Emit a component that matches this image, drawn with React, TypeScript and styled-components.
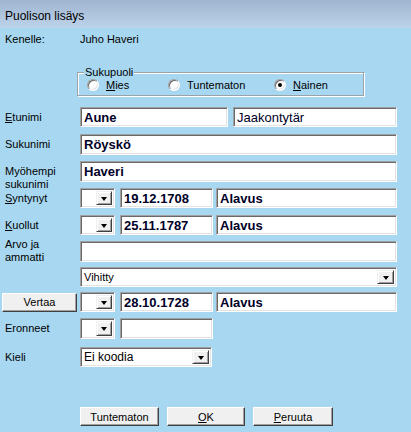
import React from "react";
import styled, { createGlobalStyle } from "styled-components";

const Global = createGlobalStyle`
  html, body { margin: 0; padding: 0; }
  body {
    width: 411px; height: 432px; overflow: hidden;
    background: #a8d8f1;
    font-family: "Liberation Sans", Arial, sans-serif;
  }
`;

const Window = styled.div`
  width: 411px;
  height: 432px;
  display: flex;
  flex-direction: column;
  background: #a8d8f1;
  box-sizing: border-box;
`;

const TitleBar = styled.div`
  height: 28px;
  flex: none;
  box-sizing: border-box;
  padding: 4px 0 0 5px;
  display: flex;
  align-items: center;
  background: linear-gradient(#9fb5d0, #bdd3ea);
  font-size: 12px;
  color: #000;
`;

const Body = styled.div`
  display: flex;
  flex-direction: column;
  padding: 0 14px 0 2px;
`;

const Row = styled.div<{ $h: number; $mt: number }>`
  display: grid;
  grid-template-columns: 78px 1fr;
  grid-template-rows: ${(p) => p.$h}px;
  align-items: center;
  height: ${(p) => p.$h}px;
  margin-top: ${(p) => p.$mt}px;
`;

const Label = styled.div<{ $two?: boolean; $off?: number }>`
  padding-left: 3px;
  font-size: 11px;
  line-height: 13px;
  color: #000;
  align-self: ${(p) => (p.$two ? "start" : "center")};
  margin-top: ${(p) => p.$off ?? 0}px;
  white-space: nowrap;
`;

const Plain = styled.div`
  font-size: 11px;
  line-height: 14px;
  color: #000;
`;

const Fields = styled.div`
  display: flex;
  height: 100%;
  align-items: stretch;
`;

const Sunken = styled.div<{ $w?: number; $ml?: number }>`
  box-sizing: border-box;
  ${(p) => (p.$w ? `width: ${p.$w}px; flex: none;` : "flex: 1;")}
  margin-left: ${(p) => p.$ml ?? 0}px;
  height: 100%;
  background: #fff;
  border: 1px solid;
  border-color: #a0a0a0 #fff #fff #a0a0a0;
  box-shadow: inset 1px 1px 0 #696969, inset -1px -1px 0 #e3e3e3;
  display: flex;
  align-items: center;
  overflow: hidden;
`;

const Value = styled.span<{ $bold?: boolean; $size?: number }>`
  padding-left: 3px;
  font-size: ${(p) => p.$size ?? 13}px;
  font-weight: ${(p) => (p.$bold ? 700 : 400)};
  color: ${(p) => (p.$bold || (p.$size ?? 13) === 13 ? "#000028" : "#000")};
  white-space: nowrap;
  flex: 1;
`;

const DropBtn = styled.div<{ $w: number }>`
  box-sizing: border-box;
  width: ${(p) => p.$w}px;
  flex: none;
  align-self: stretch;
  margin: 2px 2px 2px 0;
  background: #f0f0f0;
  border: 1px solid;
  border-color: #f0f0f0 #404040 #404040 #f0f0f0;
  box-shadow: inset 1px 1px 0 #fff, inset -1px -1px 0 #a0a0a0;
  display: flex;
  align-items: center;
  justify-content: center;
  &::after {
    content: "";
    width: 0;
    height: 0;
    border-left: 3.5px solid transparent;
    border-right: 3.5px solid transparent;
    border-top: 4px solid #000;
    margin-top: 1px;
  }
`;

const GroupBox = styled.div`
  position: relative;
  box-sizing: border-box;
  margin: 26px 0 0 75px;
  width: 287px;
  height: 24px;
  border: 1px solid #9aa3aa;
  box-shadow: 1px 1px 0 #fff, inset 1px 1px 0 #fff;
  display: grid;
  grid-template-columns: 81px 106px auto;
  align-items: center;
  padding-left: 9px;
  padding-top: 2px;
`;

const Legend = styled.span`
  position: absolute;
  top: -8px;
  left: 6px;
  padding: 0 1px;
  background: #a8d8f1;
  font-size: 11px;
  line-height: 14px;
  color: #000;
`;

const RadioItem = styled.label`
  display: flex;
  align-items: center;
  gap: 7px;
  font-size: 11px;
  color: #000;
`;

const RadioCircle = styled.span<{ $on?: boolean }>`
  box-sizing: border-box;
  width: 12px;
  height: 12px;
  border-radius: 50%;
  background: #fff;
  border: 1px solid;
  border-color: #a0a0a0 #fff #fff #a0a0a0;
  box-shadow: inset 1px 1px 0 #696969, inset -1px -1px 0 #e3e3e3;
  display: flex;
  align-items: center;
  justify-content: center;
  &::after {
    content: "";
    width: 4px;
    height: 4px;
    border-radius: 50%;
    background: ${(p) => (p.$on ? "#000" : "transparent")};
  }
`;

const U = styled.span`
  text-decoration: underline;
`;

const WinButton = styled.button<{ $w: number; $h: number }>`
  box-sizing: border-box;
  width: ${(p) => p.$w}px;
  height: ${(p) => p.$h}px;
  padding: 0;
  background: #f0f0f0;
  border: 1px solid;
  border-color: #fff #404040 #404040 #fff;
  box-shadow: inset -1px -1px 0 #a0a0a0;
  font-family: "Liberation Sans", Arial, sans-serif;
  font-size: 11px;
  color: #000;
`;

const ButtonBar = styled.div`
  display: flex;
  gap: 8px;
  margin-top: 40px;
  padding-left: 78px;
`;

function SmallCombo() {
  return (
    <Sunken $w={35}>
      <Value />
      <DropBtn $w={16} />
    </Sunken>
  );
}

export default function App() {
  return (
    <>
      <Global />
      <Window>
        <TitleBar>Puolison lisäys</TitleBar>
        <Body>
          <Row $h={14} $mt={4}>
            <Label>Kenelle:</Label>
            <Plain>Juho Haveri</Plain>
          </Row>

          <GroupBox>
            <Legend>Sukupuoli</Legend>
            <RadioItem>
              <RadioCircle />
              <span>
                <U>M</U>ies
              </span>
            </RadioItem>
            <RadioItem>
              <RadioCircle />
              <span>Tuntematon</span>
            </RadioItem>
            <RadioItem>
              <RadioCircle $on />
              <span>
                <U>N</U>ainen
              </span>
            </RadioItem>
          </GroupBox>

          <Row $h={20} $mt={11}>
            <Label>
              <U>E</U>tunimi
            </Label>
            <Fields>
              <Sunken $w={148}>
                <Value $bold>Aune</Value>
              </Sunken>
              <Sunken $ml={5}>
                <Value>Jaakontytär</Value>
              </Sunken>
            </Fields>
          </Row>

          <Row $h={21} $mt={7}>
            <Label>Sukunimi</Label>
            <Fields>
              <Sunken>
                <Value $bold>Röyskö</Value>
              </Sunken>
            </Fields>
          </Row>

          <Row $h={21} $mt={6}>
            <Label $two $off={4}>
              Myöhempi
              <br />
              sukunimi
            </Label>
            <Fields>
              <Sunken>
                <Value $bold>Haveri</Value>
              </Sunken>
            </Fields>
          </Row>

          <Row $h={20} $mt={6}>
            <Label>
              <U>S</U>yntynyt
            </Label>
            <Fields>
              <SmallCombo />
              <Sunken $w={93} $ml={5}>
                <Value $bold>19.12.1708</Value>
              </Sunken>
              <Sunken $ml={3}>
                <Value $bold>Alavus</Value>
              </Sunken>
            </Fields>
          </Row>

          <Row $h={20} $mt={7}>
            <Label>
              <U>K</U>uollut
            </Label>
            <Fields>
              <SmallCombo />
              <Sunken $w={93} $ml={5}>
                <Value $bold>25.11.1787</Value>
              </Sunken>
              <Sunken $ml={3}>
                <Value $bold>Alavus</Value>
              </Sunken>
            </Fields>
          </Row>

          <Row $h={21} $mt={6}>
            <Label $two $off={-3}>
              Arvo ja
              <br />
              ammatti
            </Label>
            <Fields>
              <Sunken>
                <Value />
              </Sunken>
            </Fields>
          </Row>

          <Row $h={20} $mt={5}>
            <span />
            <Fields>
              <Sunken>
                <Value $size={11}>Vihitty</Value>
                <DropBtn $w={17} />
              </Sunken>
            </Fields>
          </Row>

          <Row $h={20} $mt={5}>
            <WinButton $w={75} $h={19}>
              Vertaa
            </WinButton>
            <Fields>
              <SmallCombo />
              <Sunken $w={93} $ml={5}>
                <Value $bold>28.10.1728</Value>
              </Sunken>
              <Sunken $ml={3}>
                <Value $bold>Alavus</Value>
              </Sunken>
            </Fields>
          </Row>

          <Row $h={21} $mt={6}>
            <Label>Eronneet</Label>
            <Fields>
              <SmallCombo />
              <Sunken $w={93} $ml={5}>
                <Value />
              </Sunken>
            </Fields>
          </Row>

          <Row $h={20} $mt={8}>
            <Label>Kieli</Label>
            <Fields>
              <Sunken $w={132}>
                <Value $size={12}>Ei koodia</Value>
                <DropBtn $w={17} />
              </Sunken>
            </Fields>
          </Row>

          <ButtonBar>
            <WinButton $w={79} $h={19}>
              Tuntematon
            </WinButton>
            <WinButton $w={78} $h={19}>
              <U>O</U>K
            </WinButton>
            <WinButton $w={80} $h={19}>
              <U>P</U>eruuta
            </WinButton>
          </ButtonBar>
        </Body>
      </Window>
    </>
  );
}
